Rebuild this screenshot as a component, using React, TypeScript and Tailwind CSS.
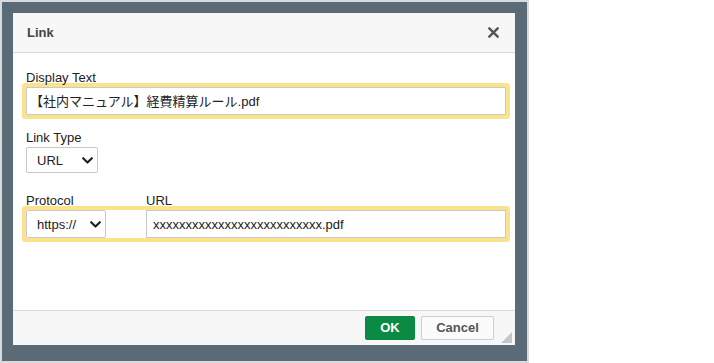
import React from "react";

const Chevron = () => (
  <svg width="11" height="7" viewBox="0 0 11 7" className="block">
    <polyline points="1.2,1.2 5.5,5.5 9.8,1.2" fill="none" stroke="#222" strokeWidth="2.2" strokeLinecap="round" strokeLinejoin="round" />
  </svg>
);

export default function App() {
  return (
    <div className="w-[714px] h-[363px] bg-white font-['Liberation_Sans','Noto_Sans_CJK_JP',sans-serif] text-[13px] text-[#222]">
      <div className="w-[529px] h-[363px] border-2 border-[#d7dbde] bg-[#5a6a76] pl-[11px] pt-[11px]">
        <div className="w-[502px] h-[332px] bg-white flex flex-col">
          <div className="h-[40px] shrink-0 border-b border-[#dadada] bg-[#f7f7f7] flex items-center justify-between pl-[14px] pr-[16px]">
            <span className="font-bold text-[13px] text-[#444]">Link</span>
            <svg width="11" height="11" viewBox="0 0 11 11" className="block">
              <line x1="1.3" y1="1.3" x2="9.7" y2="9.7" stroke="#555" strokeWidth="2.4" strokeLinecap="round" />
              <line x1="9.7" y1="1.3" x2="1.3" y2="9.7" stroke="#555" strokeWidth="2.4" strokeLinecap="round" />
            </svg>
          </div>
          <div className="flex-1 pl-[13px] pt-[17px]">
            <div className="leading-[15px]">Display Text</div>
            <div className="mt-[2px] w-[480px] h-[28px] rounded-[1px] shadow-[0_0_0_4px_#fbe28d] border border-[#c9c9c9] bg-white flex items-center pl-[3px] leading-[15px]">
              【社内マニュアル】経費精算ルール.pdf
            </div>
            <div className="mt-[15px] leading-[15px]">Link Type</div>
            <div className="mt-[2px] w-[72px] h-[26px] rounded-[2px] border border-[#c9c9c9] bg-white flex items-center justify-between pl-[10px] pr-[4px] leading-[15px]">
              <span>URL</span>
              <Chevron />
            </div>
            <div className="mt-[20px] flex leading-[15px]">
              <div className="w-[120px]">Protocol</div>
              <div>URL</div>
            </div>
            <div className="mt-[2px] w-[480px] h-[28px] rounded-[1px] shadow-[0_0_0_4px_#fbe28d] bg-white flex items-center gap-[40px]">
              <div className="w-[80px] h-[28px] rounded-[2px] border border-[#c9c9c9] bg-white flex items-center justify-between pl-[10px] pr-[4px] leading-[15px]">
                <span>https://</span>
                <Chevron />
              </div>
              <div className="flex-1 h-[28px] border border-[#c9c9c9] bg-white flex items-center pl-[6px] leading-[15px]">
                xxxxxxxxxxxxxxxxxxxxxxxxxx.pdf
              </div>
            </div>
          </div>
          <div className="relative h-[35px] shrink-0 border-t border-[#dadada] bg-[#f7f7f7] flex items-center justify-end gap-[6px] pr-[21px]">
            <div className="w-[50px] h-[24px] rounded-[2px] bg-[#0b8a43] text-white font-bold flex items-center justify-center">OK</div>
            <div className="w-[73px] h-[24px] rounded-[2px] border border-[#cfcfcf] bg-[#fbfbfb] text-[#555] font-bold flex items-center justify-center">Cancel</div>
            <svg width="11" height="11" viewBox="0 0 11 11" className="absolute right-[3px] bottom-[2px]">
              <polygon points="11,0 11,11 0,11" fill="#c6c6c6" />
            </svg>
          </div>
        </div>
      </div>
    </div>
  );
}
